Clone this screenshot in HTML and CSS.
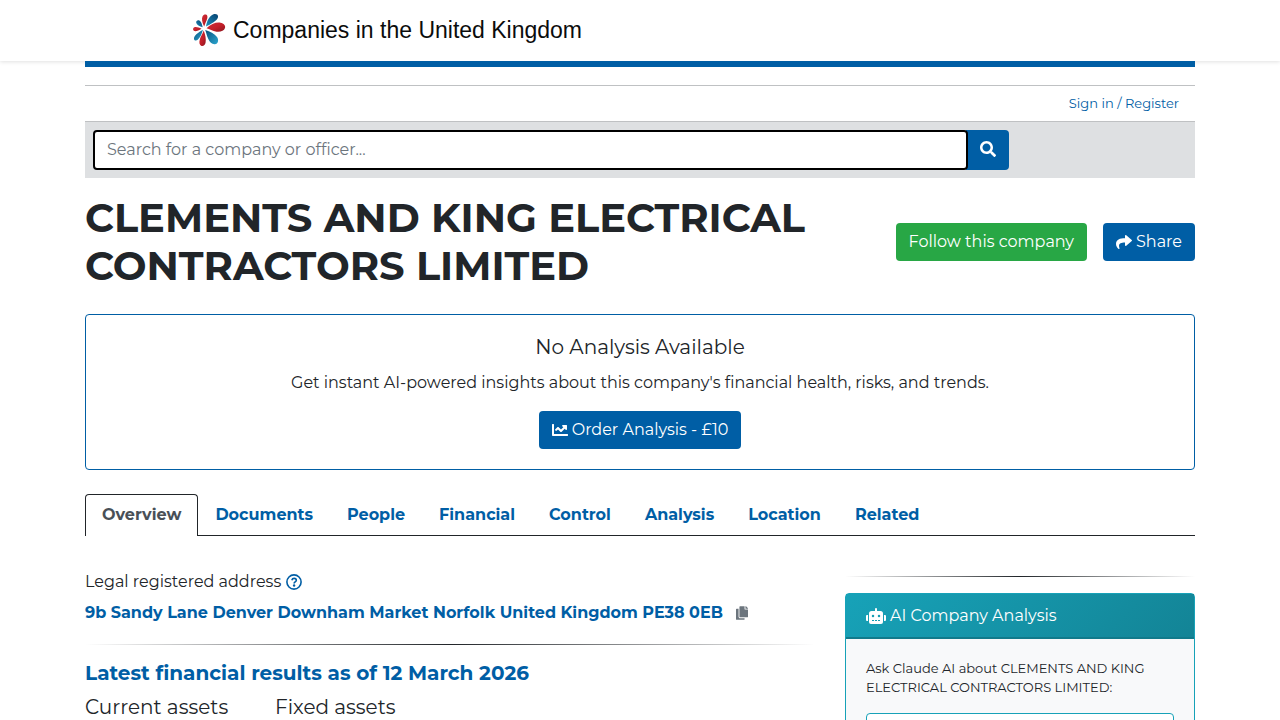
FILE: index.html
```html
<!DOCTYPE html>
<html lang="en">
<head>
<meta charset="utf-8">
<meta name="viewport" content="width=device-width, initial-scale=1">
<title>CLEMENTS AND KING ELECTRICAL CONTRACTORS LIMITED</title>
<link rel="stylesheet" href="styles.css">
</head>
<body>
<header class="site-header">
  <div class="container">
    <a class="brand" href="#">
      <svg class="brand-logo" viewBox="0 0 32 32" aria-hidden="true">
        <defs>
          <linearGradient id="red" x1="0" y1="0" x2="1" y2="1"><stop offset="0" stop-color="#c8303a"/><stop offset=".5" stop-color="#c6202a"/><stop offset="1" stop-color="#8c1620"/></linearGradient>
          <linearGradient id="navy" x1="1" y1="0" x2="0" y2="1"><stop offset="0" stop-color="#07416f"/><stop offset="1" stop-color="#1d8fbd"/></linearGradient>
          <linearGradient id="sky" x1="0" y1="0" x2="1" y2="1"><stop offset="0" stop-color="#07507c"/><stop offset="1" stop-color="#2ba6cf"/></linearGradient>
        </defs>
        <path fill="url(#red)" d="M11.2 12.6C9 8 8.400 4.500 9.600 2.200C10.700.2 13.600-.1 14.300 2C15 4.500 12.500 8.500 11.200 12.600Z"/>
        <path fill="url(#navy)" d="M13 12.600C14 6.500 16.500 1.800 20.500.3C23-.5 25.700.8 25 3.300C23.800 7.200 18.500 9.600 13 12.600Z"/>
        <path fill="url(#red)" d="M13.500 14.300C18 10 23 8 27.500 8.700C30.800 9.200 32.800 11.600 32 14C31 17 27.500 18.200 23.500 17.700C19.500 17.200 16.500 15.200 13.500 14.300Z"/>
        <path fill="url(#sky)" d="M12.200 16C17 17.600 21.500 19.500 24 23C25.800 25.600 25.400 29.300 22.700 30.100C19.500 31 16.800 28.300 15.200 24.800C13.700 21.500 13.300 18.600 12.200 16Z"/>
        <path fill="url(#red)" d="M10.700 16.600C12.400 21 13.200 25 12.600 28.600C12.100 31.200 10.300 32.400 8.500 31.900C6.400 31.300 5.900 28.500 6.800 25.500C7.700 22.300 9.700 19.600 10.700 16.600Z"/>
        <path fill="url(#sky)" d="M9.900 15.800C8.900 19.800 7.300 23.600 4.700 25.800C3.300 27 1.300 26.700 1 25C.5 21.500 5.600 18.500 9.900 15.800Z"/>
        <path fill="url(#red)" d="M8.500 14.700C5.800 16.500 3 17.700 1.300 17.100C-.3 16.500-.4 14 1.300 13.300C3.500 12.500 6 13.800 8.500 14.700Z"/>
        <path fill="url(#navy)" d="M9.700 13.300C6.500 12.300 3.700 11 3.200 8.800C2.900 7 4.700 5.700 6.400 6.600C8.500 7.700 9 10.600 9.700 13.300Z"/>
      </svg>
      <span>Companies in the United Kingdom</span>
    </a>
  </div>
</header>

<main class="container">
  <div class="accent-bar"></div>
  <nav class="user-nav" aria-label="Account"><a href="#">Sign in / Register</a></nav>

  <form class="search" role="search">
    <input class="search-input" type="search" aria-label="Search for a company or officer" placeholder="Search for a company or officer...">
    <button class="search-button" type="submit" aria-label="Search">
      <svg class="icon" viewBox="0 0 512 512" aria-hidden="true"><path d="M505 442.700L405.300 343c-4.500-4.500-10.600-7-17-7H372c27.600-35.300 44-79.700 44-128C416 93.100 322.900 0 208 0S0 93.100 0 208s93.100 208 208 208c48.300 0 92.700-16.400 128-44v16.300c0 6.400 2.500 12.500 7 17l99.700 99.700c9.400 9.400 24.600 9.400 33.900 0l28.300-28.300c9.400-9.400 9.400-24.600.1-34zM208 336c-70.700 0-128-57.200-128-128 0-70.700 57.200-128 128-128 70.700 0 128 57.200 128 128 0 70.700-57.200 128-128 128z"/></svg>
    </button>
  </form>

  <div class="title-row">
    <h1 class="title">CLEMENTS AND KING ELECTRICAL CONTRACTORS LIMITED</h1>
    <div class="title-actions">
      <button class="btn btn-success" type="button">Follow this company</button>
      <button class="btn" type="button">
        <svg class="icon" viewBox="0 0 512 512" aria-hidden="true"><path d="M503.691 189.836L327.687 37.851C312.281 24.546 288 35.347 288 56.015v80.053C127.371 137.907 0 170.100 0 322.326c0 61.441 39.581 122.309 83.333 154.132 13.653 9.931 33.111-2.533 28.077-18.631C66.066 312.814 132.917 274.316 288 272.085V360c0 20.700 24.300 31.453 39.687 18.164l176.004-152c11.071-9.562 11.086-26.753 0-36.328z"/></svg>
        Share
      </button>
    </div>
  </div>

  <section class="analysis">
    <h2 class="analysis-title">No Analysis Available</h2>
    <p class="analysis-text">Get instant AI-powered insights about this company's financial health, risks, and trends.</p>
    <button class="btn" type="button">
      <svg class="icon" viewBox="0 0 512 512" aria-hidden="true"><path d="M496 384H64V80c0-8.840-7.160-16-16-16H16C7.160 64 0 71.160 0 80v336c0 17.670 14.330 32 32 32h464c8.840 0 16-7.160 16-16v-32c0-8.840-7.160-16-16-16zM464 96H345.940c-21.380 0-32.090 25.850-16.970 40.970l32.400 32.400L288 242.750l-73.370-73.370c-12.500-12.500-32.760-12.500-45.250 0l-68.690 68.690c-6.250 6.250-6.250 16.380 0 22.630l22.620 22.620c6.250 6.250 16.380 6.250 22.630 0L192 237.250l73.370 73.370c12.500 12.500 32.760 12.500 45.250 0l96-96 32.400 32.400c15.120 15.120 40.970 4.410 40.970-16.970V112c.01-8.840-7.150-16-15.990-16z"/></svg>
      Order Analysis - £10
    </button>
  </section>

  <nav class="tabs" aria-label="Company sections">
    <a class="tab tab-active" href="#" aria-current="page">Overview</a>
    <a class="tab" href="#">Documents</a>
    <a class="tab" href="#">People</a>
    <a class="tab" href="#">Financial</a>
    <a class="tab" href="#">Control</a>
    <a class="tab" href="#">Analysis</a>
    <a class="tab" href="#">Location</a>
    <a class="tab" href="#">Related</a>
  </nav>

  <div class="columns">
    <div class="overview">
      <div class="field-label">Legal registered address
        <svg class="icon help" viewBox="0 0 16 16" role="img" aria-label="Help"><circle cx="8" cy="8" r="7.100" fill="none" stroke="currentColor" stroke-width="1.600"/><path d="M5.800 6.200C6.200 4.900 7 4.400 8.100 4.400C9.300 4.400 10.300 5.200 10.300 6.300C10.300 7.900 8.100 7.900 8.100 9.400" fill="none" stroke="currentColor" stroke-width="1.600"/><circle cx="8.100" cy="11.500" r="1.200"/></svg>
      </div>
      <div class="address">
        <a href="#">9b Sandy Lane Denver Downham Market Norfolk United Kingdom PE38 0EB</a>
        <button class="copy" type="button" aria-label="Copy address"><svg viewBox="0 0 448 512" aria-hidden="true"><path d="M320 448v40c0 13.255-10.745 24-24 24H24c-13.255 0-24-10.745-24-24V120c0-13.255 10.745-24 24-24h72v296c0 30.879 25.121 56 56 56h168zm0-344V0H152c-13.255 0-24 10.745-24 24v368c0 13.255 10.745 24 24 24h272c13.255 0 24-10.745 24-24V128H344c-13.200 0-24-10.800-24-24zm120.971-31.029L375.029 7.029A24 24 0 0 0 358.059 0H352v96h96v-6.059a24 24 0 0 0-7.029-16.970z"/></svg></button>
      </div>
      <hr class="fade-rule">
      <h2 class="results-title"><a href="#">Latest financial results as of 12 March 2026</a></h2>
      <div class="figures">
        <div>Current assets</div>
        <div>Fixed assets</div>
      </div>
    </div>

    <aside class="sidebar">
      <hr class="fade-rule">
      <section class="card">
        <h2 class="card-header">
          <svg class="icon robot" viewBox="0 0 640 512" aria-hidden="true"><path d="M32 224H64V416H32A32 32 0 0 1 0 384V256A32 32 0 0 1 32 224Zm512-48V448a64 64 0 0 1-64 64H160a64 64 0 0 1-64-64V176a80 80 0 0 1 80-80H288V32a32 32 0 0 1 64 0V96H464A80 80 0 0 1 544 176ZM264 256a40 40 0 1 0-40 40A40 40 0 0 0 264 256Zm-8 128H192v32h64Zm96 0H288v32h64ZM456 256a40 40 0 1 0-40 40A40 40 0 0 0 456 256Zm-8 128H384v32h64ZM640 256V384a32 32 0 0 1-32 32H576V224h32A32 32 0 0 1 640 256Z"/></svg>
          AI Company Analysis
        </h2>
        <div class="card-body">
          <label class="card-label" for="question">Ask Claude AI about CLEMENTS AND KING ELECTRICAL CONTRACTORS LIMITED:</label>
          <textarea class="question" id="question" rows="3"></textarea>
        </div>
      </section>
    </aside>
  </div>
</main>
</body>
</html>
```
FILE: styles.css
```css
*, *::before, *::after { box-sizing: border-box; }

body {
  margin: 0;
  background: #fff;
  color: #212529;
  font-family: Montserrat, Inter, "Open Sans", sans-serif;
  font-size: 16px;
  line-height: 24px;
}

h1, h2, p { margin: 0; }
a { color: #005ea5; text-decoration: none; }
button, input, textarea { font: inherit; }

.container {
  width: 100%;
  max-width: 1140px;
  margin: 0 auto;
  padding: 0 15px;
}

.icon {
  display: inline-block;
  width: 16px;
  height: 16px;
  flex: none;
  fill: currentColor;
}

.site-header {
  position: relative;
  padding: 14px 0 15px;
  background: #fff;
  box-shadow: 0 1px 4px rgba(0, 0, 0, .12);
}

.brand {
  display: flex;
  align-items: center;
  gap: 8px;
  margin-left: 108px;
  color: #0b0c0c;
  font-family: "Liberation Sans", Arial, sans-serif;
  font-size: 23px;
  line-height: 32px;
}
.brand-logo { width: 32px; height: 32px; overflow: visible; }

.accent-bar {
  position: relative;
  height: 6px;
  margin-bottom: 18px;
  background: #005ea5;
}

.user-nav {
  padding: 7px 16px 8px;
  border-top: 1px solid #bfc1c3;
  border-bottom: 1px solid #bfc1c3;
  font-size: 13px;
  line-height: 20px;
  text-align: right;
}

.search {
  display: flex;
  padding: 8px;
  background: #dee0e2;
}
.search-input {
  position: relative;
  width: 80%;
  height: 40px;
  padding: 0 12px 2px;
  border: 2px solid #000;
  border-radius: 4px;
  outline: 0;
  background: #fff;
  color: #495057;
}
.search-input::placeholder { color: #6c757d; opacity: 1; }
.search-button {
  display: flex;
  align-items: center;
  margin-left: -2px;
  padding: 0 13px 2px 14px;
  border: 0;
  border-radius: 0 4px 4px 0;
  background: #005ea5;
  color: #fff;
}

.title-row {
  display: flex;
  align-items: center;
  justify-content: space-between;
  gap: 16px;
  margin: 16px 0 24px;
}
.title { font-size: 40px; font-weight: 700; line-height: 48px; }
.title-actions { display: flex; flex: none; gap: 16px; }

.btn {
  display: inline-flex;
  align-items: center;
  gap: 4px;
  padding: 7px 13px;
  border: 0;
  border-radius: 4px;
  background: #005ea5;
  color: #fff;
  white-space: nowrap;
}
.btn-success { background: #28a745; }

.analysis {
  padding: 20px;
  border: 1px solid #005ea5;
  border-radius: 4px;
  text-align: center;
}
.analysis-title { margin-bottom: 12px; font-size: 20px; font-weight: 400; line-height: 24px; }
.analysis-text { margin-bottom: 16px; }

.tabs {
  display: flex;
  margin: 24px 0 32px;
  border-bottom: 1px solid #212529;
}
.tab {
  padding: 8px 16px;
  border: 1px solid transparent;
  border-bottom: 0;
  border-radius: 4px 4px 0 0;
  font-weight: 700;
}
.tab-active {
  margin-bottom: -1px;
  padding-bottom: 9px;
  border-color: #212529;
  background: #fff;
  color: #495057;
}

.columns { display: grid; grid-template-columns: minmax(0, 730fr) minmax(0, 350fr); gap: 30px; }

.field-label { display: flex; align-items: center; gap: 5px; margin-bottom: 7px; }
.help { color: #005ea5; }

.address { display: flex; align-items: center; gap: 13px; font-weight: 700; }
.copy { display: flex; padding: 0; border: 0; background: none; fill: #6c757d; }
.copy svg { width: 12px; height: 14px; }

.fade-rule {
  height: 1px;
  margin: 0;
  border: 0;
  background: linear-gradient(to right, transparent, #212529, transparent);
}
.overview { padding-top: 2px; }
.overview .fade-rule { margin: 19px 0 16px; }

.results-title { font-size: 20px; font-weight: 700; line-height: 24px; }
.figures { display: grid; grid-template-columns: repeat(4, 160px); gap: 30px; margin-top: 8px; font-size: 20px; line-height: 28px; }

.sidebar { padding-top: 8px; }
.sidebar .fade-rule { margin-bottom: 16px; }
.card {
  border: 1px solid #17a2b8;
  border-radius: 4px;
  background: #f8f9fa;
}
.card-header {
  display: flex;
  align-items: center;
  gap: 4px;
  padding: 10px 20px 9px;
  border-bottom: 2px solid #117a8b;
  background: linear-gradient(135deg, #17a2b8, #138496);
  color: #fff;
  font-size: 16px;
  font-weight: 400;
  line-height: 24px;
}
.robot { width: 20px; }
.card-body { padding: 20px; }
.card-label { display: block; margin-bottom: 16px; font-size: 13px; line-height: 19px; }
.question {
  display: block;
  width: 100%;
  padding: 6px 12px;
  border: 1px solid #17a2b8;
  border-radius: 4px;
  background: #fff;
  resize: none;
}
```
